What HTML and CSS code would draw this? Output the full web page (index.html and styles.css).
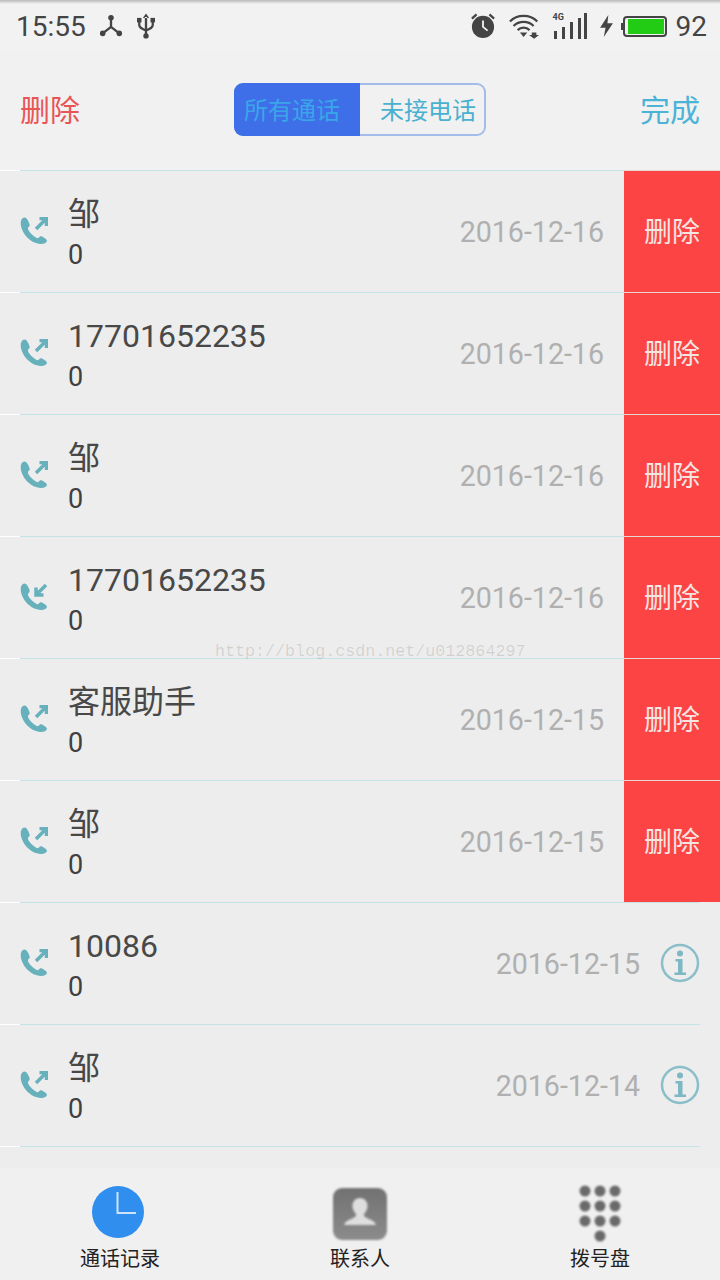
FILE: index.html
```html
<!DOCTYPE html>
<html lang="zh-CN">
<head>
    <meta charset="UTF-8">
    <meta name="viewport" content="width=device-width, initial-scale=1.0">
    <title>通话记录</title>
    <link rel="stylesheet" href="styles.css">
</head>
<body>
    <svg class="defs" width="0" height="0">
        <symbol id="phone-body" viewBox="0 0 28 28">
            <path d="M4 .5C2 1 .5 3 .7 7 1.500 16 10 26.500 21 27c3 0 5.500-1 6-3 0-1.500-2-3-5-4.500-1.500-.5-2.500 0-3.500 1.500-1 .5-3.500-.5-6-3-3.500-3-5-6-4.500-7.500 1.500-1 2-2 1.500-3.500C8.500 4 6.500 0 4 .5z"/>
        </symbol>
        <symbol id="call-out" viewBox="0 0 28 28">
            <use href="#phone-body" width="28" height="28"/>
            <path class="arrow" d="M16 12L26 2M19.500 1.500H26.500V9"/>
        </symbol>
        <symbol id="call-in" viewBox="0 0 28 28">
            <use href="#phone-body" width="28" height="28"/>
            <path class="arrow" d="M26 2L16.500 11.500M16 4.500V12H23.500"/>
        </symbol>
        <symbol id="info" viewBox="0 0 40 40">
            <circle class="info-ring" cx="20" cy="20" r="18"/>
            <circle class="info-mark" cx="20" cy="10.500" r="3"/>
            <path class="info-mark" d="M15.500 16h7v13.500H26V32H14.500v-2.500H18V18.500h-2.500z"/>
        </symbol>
    </svg>

    <div class="screen">
        <div class="status-bar">
            <div class="status-left">
                <span class="status-text">15:55</span>
                <svg class="status-icon share" viewBox="0 0 26 26">
                    <path d="M13 4V14L4 21M13 14L22 21" fill="none" stroke="#444" stroke-width="2.500"/>
                    <circle cx="13" cy="4" r="3" fill="#444"/>
                    <circle cx="4" cy="21" r="3" fill="#444"/>
                    <circle cx="22" cy="21" r="3" fill="#444"/>
                </svg>
                <svg class="status-icon usb" viewBox="0 0 20 30">
                    <path d="M10 1L6.500 6H13.500zM8.700 5H11.300V26H8.700z" fill="#444"/>
                    <path d="M2.500 9V14C2.500 17 5 18 10 20 15 18 17.500 17 17.500 14V9" fill="none" stroke="#444" stroke-width="2.500"/>
                    <rect x="0" y="6" width="5" height="5" fill="#444"/>
                    <rect x="15" y="6" width="5" height="5" fill="#444"/>
                    <circle cx="10" cy="26" r="3" fill="#444"/>
                </svg>
            </div>
            <div class="status-right">
                <svg class="status-icon alarm" viewBox="0 0 26 28">
                    <circle cx="13" cy="15" r="12" fill="#444"/>
                    <path d="M13 8V15L18 19" fill="none" stroke="#f1f1f1" stroke-width="2"/>
                    <path d="M1 6L6 1.500M25 6L20 1.500" stroke="#444" stroke-width="2.500"/>
                </svg>
                <svg class="status-icon wifi" viewBox="0 0 34 28">
                    <path d="M1 9C9 1 23 1 31 9M5 14C11 8 21 8 27 14M9.500 18.500C13 15 19 15 22.500 18.500" fill="none" stroke="#444" stroke-width="2.500"/>
                    <path d="M12 21H20L16 26zM25 21H30V24H33L27.500 28 22 24H25z" fill="#444"/>
                </svg>
                <div class="signal">
                    <span class="signal-label">4G</span>
                    <svg class="status-icon bars" viewBox="0 0 34 26">
                        <path d="M1 18H4V26H1zM9 14H12V26H9zM17 9H20V26H17zM25 5H28V26H25zM31 0H34V26H31z" fill="#444"/>
                    </svg>
                </div>
                <svg class="status-icon bolt" viewBox="0 0 14 24">
                    <path d="M9 0L0 14H6L4 24 14 9H8z" fill="#444"/>
                </svg>
                <div class="battery"><div class="battery-fill"></div></div>
                <span class="status-text">92</span>
            </div>
        </div>

        <div class="header">
            <span class="header-action danger">删除</span>
            <div class="segment">
                <span class="segment-item active">所有通话</span>
                <span class="segment-item">未接电话</span>
            </div>
            <span class="header-action done">完成</span>
        </div>

        <div class="list">
            <div class="row swiped">
                <div class="row-main">
                    <svg class="call-icon"><use href="#call-out"/></svg>
                    <div class="row-text"><div class="name">邹</div><div class="count">0</div></div>
                    <div class="date">2016-12-16</div>
                </div>
                <div class="row-delete">删除</div>
            </div>
            <div class="row swiped">
                <div class="row-main">
                    <svg class="call-icon"><use href="#call-out"/></svg>
                    <div class="row-text"><div class="name">17701652235</div><div class="count">0</div></div>
                    <div class="date">2016-12-16</div>
                </div>
                <div class="row-delete">删除</div>
            </div>
            <div class="row swiped">
                <div class="row-main">
                    <svg class="call-icon"><use href="#call-out"/></svg>
                    <div class="row-text"><div class="name">邹</div><div class="count">0</div></div>
                    <div class="date">2016-12-16</div>
                </div>
                <div class="row-delete">删除</div>
            </div>
            <div class="row swiped">
                <div class="row-main">
                    <svg class="call-icon"><use href="#call-in"/></svg>
                    <div class="row-text"><div class="name">17701652235</div><div class="count">0</div></div>
                    <div class="date">2016-12-16</div>
                </div>
                <div class="row-delete">删除</div>
            </div>
            <div class="row swiped">
                <div class="row-main">
                    <svg class="call-icon"><use href="#call-out"/></svg>
                    <div class="row-text"><div class="name">客服助手</div><div class="count">0</div></div>
                    <div class="date">2016-12-15</div>
                </div>
                <div class="row-delete">删除</div>
            </div>
            <div class="row swiped">
                <div class="row-main">
                    <svg class="call-icon"><use href="#call-out"/></svg>
                    <div class="row-text"><div class="name">邹</div><div class="count">0</div></div>
                    <div class="date">2016-12-15</div>
                </div>
                <div class="row-delete">删除</div>
            </div>
            <div class="row">
                <div class="row-main">
                    <svg class="call-icon"><use href="#call-out"/></svg>
                    <div class="row-text"><div class="name">10086</div><div class="count">0</div></div>
                    <div class="date">2016-12-15</div>
                    <svg class="info-icon"><use href="#info"/></svg>
                </div>
            </div>
            <div class="row">
                <div class="row-main">
                    <svg class="call-icon"><use href="#call-out"/></svg>
                    <div class="row-text"><div class="name">邹</div><div class="count">0</div></div>
                    <div class="date">2016-12-14</div>
                    <svg class="info-icon"><use href="#info"/></svg>
                </div>
            </div>
            <div class="row">
                <div class="row-main"></div>
            </div>
        </div>

        <div class="tab-bar">
            <div class="tab">
                <svg class="tab-icon" viewBox="0 0 54 54">
                    <circle cx="25" cy="26" r="26" fill="#2f8eee"/>
                    <path d="M24.500 6V27H43" fill="none" stroke="#cfe4fa" stroke-width="2"/>
                </svg>
                <span class="tab-label">通话记录</span>
            </div>
            <div class="tab">
                <svg class="tab-icon blur" viewBox="0 0 54 54">
                    <defs>
                        <linearGradient id="contact-bg" x1="0" y1="0" x2="0" y2="1">
                            <stop offset="0" stop-color="#727272"/>
                            <stop offset="1" stop-color="#8c8c8c"/>
                        </linearGradient>
                    </defs>
                    <rect x="0" y="2" width="54" height="52" rx="9" fill="url(#contact-bg)"/>
                    <path d="M27 12c5 0 8 4 7.500 9-.5 3-2 5.500-3.500 7-.5 2 1 3.500 5 5 4 1.500 6 3 7 6H11c1-3 3-4.500 7-6 4-1.500 5.500-3 5-5-1.500-1.500-3-4-3.500-7C19 16 22 12 27 12z" fill="#dedede"/>
                </svg>
                <span class="tab-label">联系人</span>
            </div>
            <div class="tab">
                <svg class="tab-icon blur" viewBox="0 0 54 54" fill="#6a6a6a">
                    <circle cx="12" cy="5" r="5.500"/><circle cx="27" cy="5" r="5.500"/><circle cx="42" cy="5" r="5.500"/>
                    <circle cx="12" cy="20" r="5.500"/><circle cx="27" cy="20" r="5.500"/><circle cx="42" cy="20" r="5.500"/>
                    <circle cx="12" cy="35" r="5.500"/><circle cx="27" cy="35" r="5.500"/><circle cx="42" cy="35" r="5.500"/>
                    <circle cx="27" cy="50" r="5.500"/>
                </svg>
                <span class="tab-label">拨号盘</span>
            </div>
        </div>

        <div class="watermark">http://blog.csdn.net/u012864297</div>
    </div>
</body>
</html>
```

FILE: styles.css
```css
* {
    margin: 0;
    padding: 0;
    box-sizing: border-box;
}

body {
    font-family: Roboto, "Noto Sans CJK SC", sans-serif;
    background: #f1f1f1;
}

.defs {
    position: absolute;
}

.arrow {
    fill: none;
    stroke: #67b1bc;
    stroke-width: 3.5;
}

.info-ring {
    fill: none;
    stroke: #8abfca;
    stroke-width: 2.5;
}

.info-mark {
    fill: #7db8c4;
}

.screen {
    position: relative;
    width: 720px;
    height: 1280px;
    overflow: hidden;
    display: flex;
    flex-direction: column;
    background: #f1f1f1;
}

/* status bar */
.status-bar {
    height: 50px;
    flex-shrink: 0;
    display: flex;
    align-items: center;
    justify-content: space-between;
    padding: 2px 13px 0 16px;
    background: linear-gradient(#b8b8b8, #f2f2f2 4px);
}

.status-left,
.status-right {
    display: flex;
    align-items: center;
}

.status-text {
    font-size: 28px;
    color: #444;
}

.status-icon {
    display: block;
}

.share {
    width: 24px;
    height: 24px;
    margin-left: 13px;
}

.usb {
    width: 18px;
    height: 28px;
    margin-left: 14px;
}

.alarm {
    width: 24px;
    height: 26px;
}

.wifi {
    width: 31px;
    height: 26px;
    margin-left: 14px;
}

.signal {
    position: relative;
    margin-left: 13px;
}

.signal-label {
    position: absolute;
    left: 0;
    top: -1px;
    font-size: 9px;
    font-weight: 700;
    color: #444;
}

.bars {
    width: 34px;
    height: 26px;
}

.bolt {
    width: 15px;
    height: 22px;
    margin-left: 12px;
}

.battery {
    position: relative;
    width: 44px;
    height: 21px;
    margin-left: 9px;
    margin-right: 9px;
    padding: 1px 1px 1px 3px;
    border: 2px solid #444;
    border-radius: 4px;
}

.battery::before {
    content: "";
    position: absolute;
    left: -4px;
    top: 5px;
    width: 2px;
    height: 7px;
    background: #444;
}

.battery-fill {
    height: 100%;
    background: #22cc14;
}

/* header */
.header {
    height: 120px;
    flex-shrink: 0;
    display: flex;
    align-items: center;
    justify-content: space-between;
    padding: 0 20px 4px 20px;
}

.header-action {
    font-size: 30px;
}

.danger {
    color: #e85555;
}

.done {
    color: #4bb2d8;
}

.segment {
    width: 252px;
    height: 53px;
    margin-top: 2px;
    display: flex;
    border: 2px solid #a4bcea;
    border-radius: 9px;
}

.segment-item {
    display: flex;
    align-items: center;
    justify-content: flex-end;
    font-size: 24px;
    color: #4ab0d0;
    padding: 0 8px 2px 0;
    flex: 1;
}

.segment-item.active {
    flex: none;
    width: 126px;
    margin: -2px 0 -2px -2px;
    justify-content: flex-start;
    padding: 0 0 2px 10px;
    background: #3e6fe8;
    color: #3aa6e8;
    border-radius: 9px 0 0 9px;
}

/* list */
.list {
    flex: 1;
    overflow: hidden;
    background: #ededed;
}

.row {
    height: 122px;
    display: flex;
    padding-left: 20px;
    background: linear-gradient(#fff, #fff) left top / 20px 1px no-repeat;
}

.row-main {
    flex: 1;
    display: flex;
    align-items: center;
    margin-right: 20px;
    border-top: 1px solid #c4e4e6;
}

.row.swiped .row-main {
    margin-right: 0;
    padding-right: 20px;
}

.call-icon {
    width: 28px;
    height: 28px;
    margin-top: -2px;
    fill: #67b1bc;
    flex-shrink: 0;
}

.row-text {
    flex: 1;
    padding: 5px 0 0 20px;
}

.name {
    font-size: 32px;
    line-height: 42px;
    color: #484848;
}

.count {
    font-size: 27px;
    line-height: 41px;
    color: #404040;
}

.date {
    font-size: 28.6px;
    margin-bottom: 0;
    color: #b0b0b0;
}

.info-icon {
    width: 40px;
    height: 40px;
    margin: -2px 0 0 20px;
}

.row-delete {
    width: 96px;
    flex-shrink: 0;
    display: flex;
    align-items: center;
    justify-content: center;
    padding-bottom: 3px;
    font-size: 28px;
    color: #f4e4e2;
    background: #fd4444;
    border-top: 1px solid #e6d6d2;
}

/* tab bar */
.tab-bar {
    height: 112px;
    flex-shrink: 0;
    display: flex;
    background: #f0f0f0;
    padding-top: 18px;
}

.tab {
    flex: 1;
    display: flex;
    flex-direction: column;
    align-items: center;
}

.tab-icon {
    width: 54px;
    height: 54px;
    overflow: visible;
}

.tab-icon.blur {
    filter: blur(0.8px);
}

.tab-label {
    font-size: 20px;
    line-height: 28px;
    margin-top: 5px;
    color: #222;
}

.watermark {
    position: absolute;
    left: 215px;
    top: 642px;
    font-family: "Liberation Mono", monospace;
    font-size: 16.7px;
    color: rgba(0, 0, 0, 0.12);
}
```
